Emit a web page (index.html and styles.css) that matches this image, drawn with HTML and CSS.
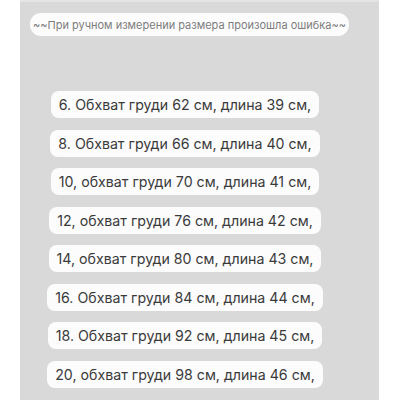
FILE: index.html
```html
<!DOCTYPE html>
<html lang="ru">
<head>
<meta charset="utf-8">
<link rel="stylesheet" href="styles.css">
</head>
<body>
<div class="panel">
  <div class="note">~~При ручном измерении размера произошла ошибка~~</div>
  <ul class="list">
    <li class="pill">6. Обхват груди 62 см, длина 39 см,</li>
    <li class="pill">8. Обхват груди 66 см, длина 40 см,</li>
    <li class="pill">10, обхват груди 70 см, длина 41 см,</li>
    <li class="pill">12, обхват груди 76 см, длина 42 см,</li>
    <li class="pill">14, обхват груди 80 см, длина 43 см,</li>
    <li class="pill">16. Обхват груди 84 см, длина 44 см,</li>
    <li class="pill">18. Обхват груди 92 см, длина 45 см,</li>
    <li class="pill">20, обхват груди 98 см, длина 46 см,</li>
  </ul>
</div>
</body>
</html>
```
FILE: styles.css
```css
html, body {
  margin: 0;
  padding: 0;
  background: #ffffff;
}
.panel {
  margin: 0 21px 0 20px;
  height: 400px;
  background: #d9d9d9;
  border-top: 2px solid #e4e4e4;
  padding-top: 11px;
  box-sizing: border-box;
  font-family: Inter, Roboto, sans-serif;
  overflow: hidden;
}
.note {
  margin-left: 10px;
  width: 319px;
  height: 23px;
  box-sizing: border-box;
  background: #fcfcfc;
  border-radius: 11px;
  color: #7c7c7c;
  font-size: 11px;
  display: flex;
  align-items: center;
  justify-content: center;
  white-space: nowrap;
}
.list {
  list-style: none;
  margin: 55px 0 0 0;
  padding: 0 29px 0 0;
  display: flex;
  flex-direction: column;
  align-items: center;
  gap: 11.5px;
}
.pill {
  height: 27px;
  display: flex;
  align-items: center;
  padding: 0 8px;
  background: #fcfcfc;
  border-radius: 8px;
  color: #3a3a3a;
  font-size: 14.2px;
  white-space: nowrap;
}
```
